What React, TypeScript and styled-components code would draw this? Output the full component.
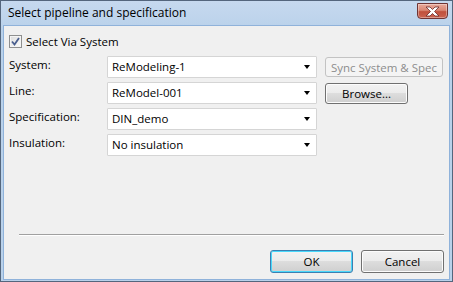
import React from 'react';
import styled, { createGlobalStyle } from 'styled-components';

const GlobalStyle = createGlobalStyle`
  html, body {
    margin: 0;
    padding: 0;
    background: #ffffff;
  }
  body {
    font-family: 'Open Sans', 'Noto Sans', sans-serif;
    font-size: 11.5px;
    color: #000;
  }
`;

const rows = [
  { label: 'System:', value: 'ReModeling-1' },
  { label: 'Line:', value: 'ReModel-001' },
  { label: 'Specification:', value: 'DIN_demo' },
  { label: 'Insulation:', value: 'No insulation' },
];

export default function App() {
  return (
    <>
      <GlobalStyle />
      <Window>
        <TitleBar>
          <Title>Select pipeline and specification</Title>
          <CloseButton aria-label="Close">
            <svg width="15" height="11" viewBox="0 0 15 11">
              <path
                d="M1 1 H5 L7.5 3.5 L10 1 H14 L9.5 5.5 L14 10 H10 L7.5 7.5 L5 10 H1 L5.5 5.5 Z"
                fill="#ffffff"
                stroke="#6b2a2a"
                strokeWidth="0.8"
                strokeLinejoin="round"
              />
            </svg>
          </CloseButton>
        </TitleBar>
        <Client>
          <CheckRow>
            <CheckBox>
              <svg width="9" height="9" viewBox="0 0 9 9">
                <path d="M1 4.5 L3.5 7.5 L8 1" fill="none" stroke="#4a5f8f" strokeWidth="1.8" />
              </svg>
            </CheckBox>
            <span>Select Via System</span>
          </CheckRow>
          <Form>
            {rows.map((r, i) => (
              <React.Fragment key={r.label}>
                <FieldLabel>{r.label}</FieldLabel>
                <Combo>
                  <span>{r.value}</span>
                  <Arrow />
                </Combo>
                {i === 0 && <Button disabled $wide>Sync System &amp; Spec</Button>}
                {i === 1 && <Button>Browse...</Button>}
                {i > 1 && <span />}
              </React.Fragment>
            ))}
          </Form>
          <Separator />
          <Footer>
            <Button $default $footer>OK</Button>
            <Button $footer>Cancel</Button>
          </Footer>
        </Client>
      </Window>
    </>
  );
}

const Window = styled.div`
  box-sizing: border-box;
  width: 453px;
  height: 282px;
  display: flex;
  flex-direction: column;
  border: 1px solid #54667d;
  background: linear-gradient(#c6d9ef, #b9d1ea 30px);
  padding: 0 2px 1px 2px;
`;

const TitleBar = styled.div`
  height: 24px;
  display: flex;
  align-items: center;
  justify-content: space-between;
  padding: 0 2px 0 5px;
`;

const Title = styled.div`
  font-size: 12px;
  color: #000;
  margin-top: -2px;
`;

const CloseButton = styled.div`
  box-sizing: border-box;
  width: 31px;
  height: 16px;
  margin-top: -4px;
  border: 1px solid #6e3434;
  border-radius: 0 0 4px 4px;
  background: linear-gradient(#e9a99b 0%, #d98774 45%, #c0503c 55%, #cb6350 100%);
  box-shadow: inset 0 0 0 1px rgba(255, 255, 255, 0.35);
  display: flex;
  align-items: center;
  justify-content: center;
`;

const Client = styled.div`
  flex: 1;
  display: flex;
  flex-direction: column;
  background: #f0f0f0;
  border: 1px solid #8fb2da;
  padding: 9px 5px 6px 4px;
`;

const CheckRow = styled.label`
  display: flex;
  align-items: center;
  gap: 4px;
  height: 13px;
  margin-left: 1px;
`;

const CheckBox = styled.span`
  box-sizing: border-box;
  width: 13px;
  height: 13px;
  border: 1px solid #8e8f8f;
  background: linear-gradient(135deg, #dcdcdc, #fcfcfc);
  box-shadow: inset 0 0 0 1px #f4f4f4;
  display: flex;
  align-items: center;
  justify-content: center;
`;

const Form = styled.div`
  display: grid;
  grid-template-columns: 90px 210px auto;
  grid-auto-rows: 22px;
  column-gap: 8px;
  row-gap: 4px;
  margin-top: 8px;
  margin-left: 1px;
`;

const FieldLabel = styled.div`
  padding-top: 1px;
  line-height: 16px;
`;

const Combo = styled.div`
  box-sizing: border-box;
  display: flex;
  align-items: center;
  justify-content: space-between;
  background: #fff;
  border: 1px solid #d5d5d5;
  border-radius: 1px;
  padding: 0 6px 0 4px;
  line-height: 16px;
`;

const Arrow = styled.span`
  width: 0;
  height: 0;
  border-left: 3.5px solid transparent;
  border-right: 3.5px solid transparent;
  border-top: 4px solid #000;
`;

const Button = styled.button<{ $wide?: boolean; $default?: boolean; $footer?: boolean }>`
  box-sizing: border-box;
  font-family: inherit;
  font-size: 11.5px;
  padding: 0;
  margin-top: 1px;
  width: ${(p) => (p.$wide ? '118px' : '83px')};
  height: ${(p) => (p.$wide ? '20px' : p.$footer ? '23px' : '21px')};
  border-radius: 3px;
  color: #000;
  white-space: nowrap;
  border: 1px solid ${(p) => (p.$default ? '#3c7fb1' : '#707070')};
  background: linear-gradient(#f2f2f2 0%, #ebebeb 50%, #dddddd 50%, #cfcfcf 100%);
  box-shadow: inset 0 0 0 1px ${(p) => (p.$default ? '#48d8fb' : '#fcfcfc')};

  &:disabled {
    color: #8d8d8d;
    border-color: #c3c3c3;
    background: #f4f4f4;
    box-shadow: none;
  }
`;

const Separator = styled.div`
  margin: auto 0 0 11px;
  height: 1px;
  background: #a0a0a0;
  border-bottom: 1px solid #ffffff;
`;

const Footer = styled.div`
  display: flex;
  justify-content: flex-end;
  gap: 8px;
  margin-top: 13px;
`;
